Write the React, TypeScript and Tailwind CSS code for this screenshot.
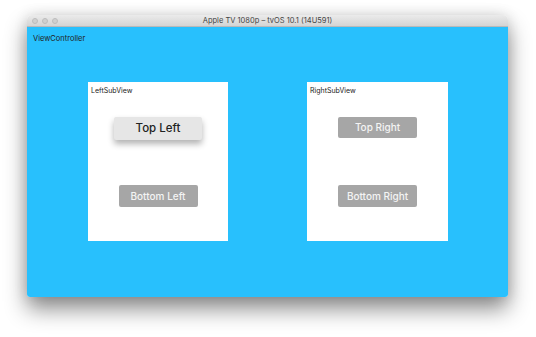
export default function App() {
  return (
    <main className="min-h-[337px] w-[536px] bg-white pl-[27px] pt-[15px] font-['Inter',sans-serif]">
      <div className="w-[481px] rounded-t-[5px] rounded-b-[3px] shadow-[0_12px_22px_rgba(0,0,0,0.45),0_0_14px_rgba(0,0,0,0.12)] overflow-hidden">
        <header className="relative h-[12px] bg-gradient-to-b from-[#ebebeb] to-[#d4d4d4] border-b border-[#b9b9b9] flex items-center justify-center">
          <div className="absolute left-[5px] top-[3px] flex gap-[4px]">
            <span className="w-[6px] h-[6px] rounded-full bg-[#d0d0d0] border border-[#bdbdbd]" />
            <span className="w-[6px] h-[6px] rounded-full bg-[#d0d0d0] border border-[#bdbdbd]" />
            <span className="w-[6px] h-[6px] rounded-full bg-[#d0d0d0] border border-[#bdbdbd]" />
          </div>
          <p className="text-[7.5px] leading-none text-[#444]">
            Apple TV 1080p – tvOS 10.1 (14U591)
          </p>
        </header>

        <section className="h-[270px] bg-[#28c0fd] pt-[7px]">
          <p className="pl-[6px] text-[7.5px] leading-[10px] text-[#222]">
            ViewController
          </p>

          <div className="flex gap-[79px] ml-[61px] mt-[38px]">
            <div className="w-[140px] h-[159px] bg-white pt-[5px]">
              <p className="pl-[3px] text-[7px] leading-[8px] text-[#222]">LeftSubView</p>
              <div className="flex flex-col items-center mt-[22px]">
                <button className="w-[88px] h-[23px] rounded-[2px] bg-[#e6e6e6] shadow-[0_4px_6px_rgba(0,0,0,0.3)] text-[11.5px] font-medium text-[#222]">
                  Top Left
                </button>
                <button className="mt-[45px] w-[79px] h-[22px] rounded-[2px] bg-[#a6a6a6] text-[10px] font-medium text-[#f4f4f4]">
                  Bottom Left
                </button>
              </div>
            </div>

            <div className="w-[141px] h-[159px] bg-white pt-[5px]">
              <p className="pl-[3px] text-[7px] leading-[8px] text-[#222]">RightSubView</p>
              <div className="flex flex-col items-center mt-[22px]">
                <button className="w-[79px] h-[21px] rounded-[2px] bg-[#a6a6a6] text-[10px] font-medium text-[#f4f4f4]">
                  Top Right
                </button>
                <button className="mt-[47px] w-[79px] h-[22px] rounded-[2px] bg-[#a6a6a6] text-[10px] font-medium text-[#f4f4f4]">
                  Bottom Right
                </button>
              </div>
            </div>
          </div>
        </section>
      </div>
    </main>
  )
}
